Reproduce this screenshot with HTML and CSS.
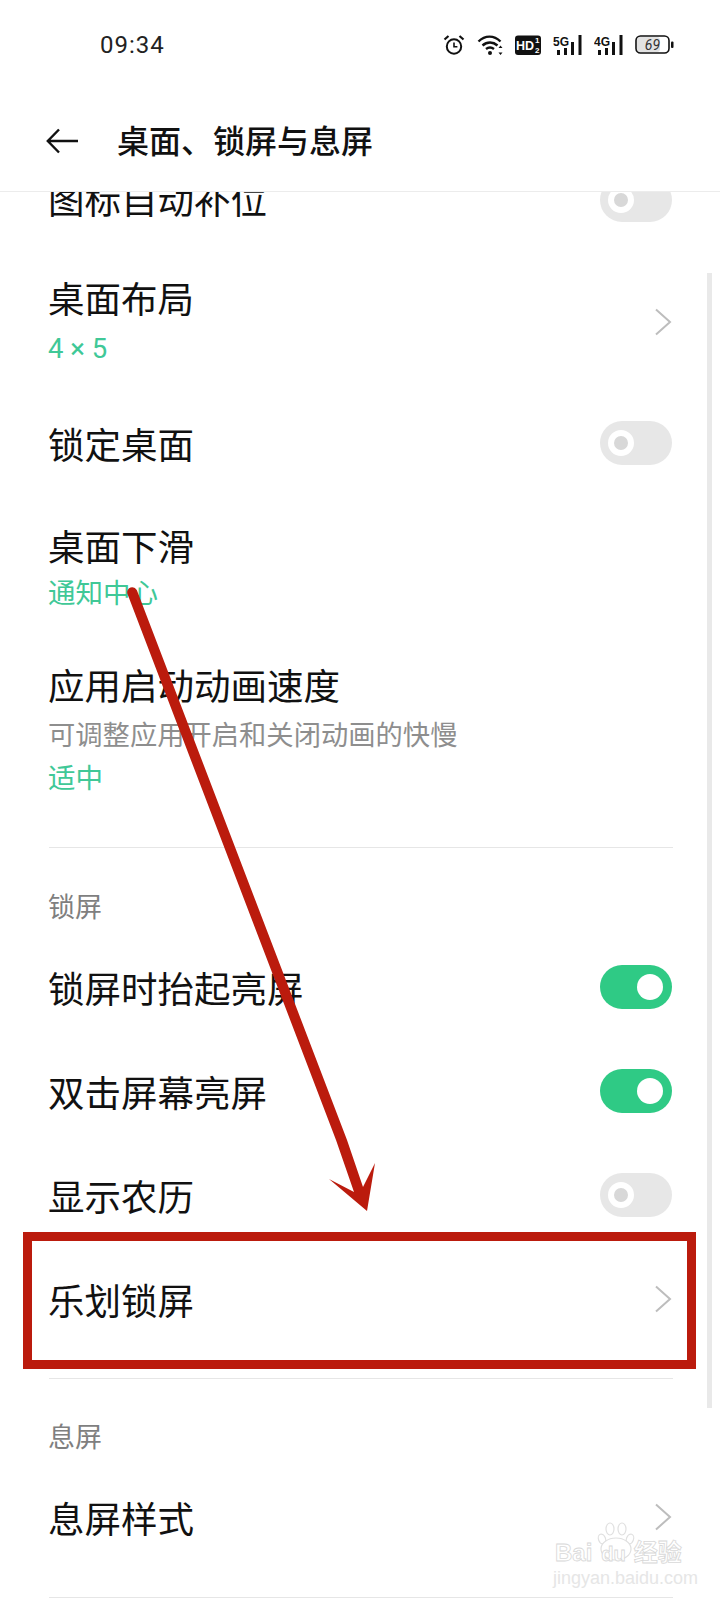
FILE: index.html
```html
<!DOCTYPE html>
<html lang="zh-CN">
<head>
    <meta charset="UTF-8">
    <meta name="viewport" content="width=device-width, initial-scale=1.0">
    <title>桌面、锁屏与息屏</title>
    <link rel="stylesheet" href="styles.css">
</head>
<body>
    <div class="screen">
        <header class="top">
            <div class="status">
                <span class="time">09:34</span>
                <div class="status-icons">
                    <svg width="22" height="22" viewBox="0 0 22 22" fill="none" stroke="#111" stroke-width="2">
                        <circle cx="11" cy="12.500" r="7.200"/>
                        <path d="M11 8.500v4.200h3.400" stroke-width="1.600"/>
                        <path d="M1.500 5.500 5.500 2M20.500 5.500 16.500 2" stroke-width="2.200"/>
                    </svg>
                    <svg width="26" height="22" viewBox="0 0 26 22" fill="none" stroke="#111" stroke-width="2.400">
                        <path d="M1.500 7.500c6.500-6.500 15.500-6.500 22 0"/>
                        <path d="M5.500 11.500c4.500-4 10.500-4 15 0"/>
                        <path d="M9 15c2.500-2 5.500-2 8 0"/>
                        <circle cx="13" cy="19" r="2" fill="#111" stroke="none"/>
                        <path d="M23.500 11.500l-2 2.500h4zM23.500 21l-2-2.500h4z" fill="#111" stroke="none"/>
                    </svg>
                    <svg width="26" height="22" viewBox="0 0 26 22">
                        <rect x="0" y="1.500" width="26" height="19.500" rx="3" fill="#111"/>
                        <text x="1" y="16" class="hd-text">HD</text>
                        <text x="20" y="9" class="hd-small">1</text>
                        <text x="20" y="18.500" class="hd-small">2</text>
                    </svg>
                    <svg width="29" height="22" viewBox="0 0 29 22" fill="#111">
                        <text x="0" y="12" class="net-text">5G</text>
                        <rect x="4" y="16" width="3" height="5"/>
                        <rect x="11" y="14" width="3" height="7"/>
                        <rect x="18" y="8" width="3" height="13"/>
                        <rect x="25.500" y="1" width="3" height="20"/>
                    </svg>
                    <svg width="29" height="22" viewBox="0 0 29 22" fill="#111">
                        <text x="0" y="12" class="net-text">4G</text>
                        <rect x="4" y="16" width="3" height="5"/>
                        <rect x="11" y="14" width="3" height="7"/>
                        <rect x="18" y="8" width="3" height="13"/>
                        <rect x="25.500" y="1" width="3" height="20"/>
                    </svg>
                    <svg width="39" height="22" viewBox="0 0 39 22">
                        <rect x="2" y="3" width="23" height="15" rx="3" fill="#e2e2e2"/>
                        <rect x="1" y="2" width="33" height="17" rx="4.500" fill="none" stroke="#111" stroke-width="1.600"/>
                        <rect x="36" y="7.500" width="2.500" height="6.500" rx="1" fill="#111"/>
                        <text x="17.500" y="16" class="batt-text">69</text>
                    </svg>
                </div>
            </div>
            <div class="titlebar">
                <svg class="back" width="32" height="26" viewBox="0 0 32 26" fill="none" stroke="#111" stroke-width="2.400">
                    <path d="M32 13H2M13 1.500 1.800 13 13 24.500"/>
                </svg>
                <h1>桌面、锁屏与息屏</h1>
            </div>
        </header>

        <main class="list">
            <div class="row row-first">
                <span class="name">图标自动补位</span>
                <span class="switch"></span>
            </div>
            <div class="row row-sub">
                <div>
                    <div class="name">桌面布局</div>
                    <div class="value value-num">4 × 5</div>
                </div>
                <svg class="chev" width="18" height="28" viewBox="0 0 18 28"><path d="M2 1.500 16 14 2 26.500"/></svg>
            </div>
            <div class="row">
                <span class="name">锁定桌面</span>
                <span class="switch"></span>
            </div>
            <div class="row row-sub row-sub2">
                <div>
                    <div class="name">桌面下滑</div>
                    <div class="value">通知中心</div>
                </div>
            </div>
            <div class="row row-long">
                <div>
                    <div class="name">应用启动动画速度</div>
                    <div class="hint">可调整应用开启和关闭动画的快慢</div>
                    <div class="value">适中</div>
                </div>
            </div>

            <hr class="line">
            <div class="section">锁屏</div>
            <div class="row">
                <span class="name">锁屏时抬起亮屏</span>
                <span class="switch on"></span>
            </div>
            <div class="row">
                <span class="name">双击屏幕亮屏</span>
                <span class="switch on"></span>
            </div>
            <div class="row">
                <span class="name">显示农历</span>
                <span class="switch"></span>
            </div>
            <div class="row">
                <span class="name">乐划锁屏</span>
                <svg class="chev" width="18" height="28" viewBox="0 0 18 28"><path d="M2 1.500 16 14 2 26.500"/></svg>
            </div>

            <hr class="line line-tight">
            <div class="section">息屏</div>
            <div class="row">
                <span class="name">息屏样式</span>
                <svg class="chev" width="18" height="28" viewBox="0 0 18 28"><path d="M2 1.500 16 14 2 26.500"/></svg>
            </div>
            <hr class="line">
        </main>

        <div class="scrollbar"></div>

        <!-- annotation drawn on top of the screenshot -->
        <div class="red-box"></div>
        <svg class="arrow" width="720" height="1600" viewBox="0 0 720 1600">
            <path d="M127.500 594a5 5 0 0 1 9.500-3.500L347 1140 363 1187 375 1163 367 1211 329 1179 354 1192 336 1140z" fill="#bb1b0d"/>
        </svg>

        <div class="watermark">
            <svg class="paw" width="40" height="40" viewBox="0 0 40 40" fill="#fff" stroke="#e0e0e0" stroke-width="1.200">
                <ellipse cx="6" cy="17" rx="3.500" ry="5" transform="rotate(-20 6 17)"/>
                <ellipse cx="14" cy="7" rx="4" ry="6"/>
                <ellipse cx="26" cy="7" rx="4" ry="6"/>
                <ellipse cx="34" cy="17" rx="3.500" ry="5" transform="rotate(20 34 17)"/>
                <ellipse cx="20" cy="27" rx="15" ry="11"/>
            </svg>
            <div class="wm-logo">Bai<span class="wm-du">du</span>经验</div>
            <div class="wm-url">jingyan.baidu.com</div>
        </div>
    </div>
</body>
</html>
```

FILE: styles.css
```css
* {
    box-sizing: border-box;
}
body {
    margin: 0;
    background: #fff;
    color: #111;
    font-family: "Noto Sans CJK SC", "Noto Sans", sans-serif;
}
.screen {
    position: relative;
    width: 720px;
    height: 1600px;
    overflow: hidden;
    background: #fff;
}

/* top area */
.top {
    height: 192px;
    border-bottom: 1px solid #ececec;
    background: #fff;
    position: relative;
    z-index: 1;
}
.status {
    display: flex;
    justify-content: space-between;
    align-items: center;
    height: 90px;
    padding: 0 46px 0 100px;
}
.time {
    font-family: Roboto, sans-serif;
    font-size: 24px;
    letter-spacing: 1px;
    color: #222;
}
.status-icons {
    display: flex;
    align-items: center;
    gap: 12px;
}
.hd-text {
    font: bold 12.500px "Liberation Sans", sans-serif;
    fill: #fff;
}
.hd-small {
    font: bold 8px "Liberation Sans", sans-serif;
    fill: #fff;
}
.net-text {
    font: bold 12px "Liberation Sans", sans-serif;
    fill: #111;
}
.batt-text {
    font: italic 14px Roboto, sans-serif;
    fill: #333;
    text-anchor: middle;
}
.titlebar {
    display: flex;
    align-items: center;
    gap: 39px;
    height: 101px;
    padding-left: 46px;
}
.titlebar h1 {
    margin: 0 0 4px;
    font-size: 32px;
    font-weight: 500;
    line-height: 44px;
}

/* settings list */
.list {
    height: 1408px;
    overflow: hidden;
}
.row {
    display: flex;
    justify-content: space-between;
    align-items: center;
    height: 104px;
    padding: 0 48px;
}
.row-first {
    margin-top: -43px;
}
.row-first .name {
    margin-top: -4px;
}
.row-sub {
    height: 139px;
}
.row-sub2 {
    height: 148px;
    padding-bottom: 2px;
}
.row-long {
    height: 176px;
    padding-bottom: 2px;
}
.name {
    font-size: 36.500px;
    line-height: 50px;
    color: #111;
}
.value {
    font-family: Roboto, "Noto Sans CJK SC", sans-serif;
    font-size: 27.500px;
    line-height: 46px;
    color: #40c897;
}
.value-num {
    margin-top: 3px;
}
.hint {
    font-size: 27.300px;
    line-height: 46px;
    color: #8e8e8e;
}
.section {
    height: 50px;
    padding-left: 48px;
    font-size: 27px;
    line-height: 40px;
    color: #7f7f7f;
}
.line {
    height: 1px;
    margin: 27px 47px 38px 49px;
    border: 0;
    background: #e6e6e6;
}
.line-tight {
    margin-top: 26px;
    margin-bottom: 37px;
}
.chev {
    margin-top: -2px;
    fill: none;
    stroke: #bdbdbd;
    stroke-width: 2;
}

/* toggles */
.switch {
    position: relative;
    width: 72px;
    height: 44px;
    margin-top: -2px;
    border-radius: 22px;
    background: #e7e7e7;
}
.switch::after {
    content: "";
    position: absolute;
    top: 9px;
    left: 8px;
    box-sizing: border-box;
    width: 26px;
    height: 26px;
    border: 6px solid #fff;
    border-radius: 50%;
    background: #d8d8d8;
}
.switch.on {
    background: #2fca85;
}
.switch.on::after {
    left: 37px;
    border: 0;
    background: #fff;
}

.scrollbar {
    position: absolute;
    top: 273px;
    left: 707px;
    width: 5px;
    height: 1135px;
    background: #e9e9e9;
}

/* red annotation */
.red-box {
    position: absolute;
    top: 1232px;
    left: 23px;
    width: 673px;
    height: 137px;
    border: 9px solid #bb1b0d;
}
.arrow {
    position: absolute;
    top: 0;
    left: 0;
}

/* baidu watermark */
.watermark {
    position: absolute;
    top: 1522px;
    left: 555px;
    width: 130px;
    color: #fff;
}
.paw {
    position: absolute;
    top: 0;
    left: 41px;
}
.wm-logo {
    position: relative;
    margin-top: 18px;
    font: bold 24px "Liberation Sans", "Noto Sans CJK SC", sans-serif;
    line-height: 26px;
    white-space: nowrap;
    -webkit-text-stroke: 0.800px #d8d8d8;
}
.wm-du {
    margin: 0 8px 0 9px;
    font-size: 20px;
}
.wm-url {
    position: relative;
    margin: 1px 0 0 -2px;
    font: 18px "Liberation Sans", sans-serif;
    white-space: nowrap;
    color: #e6e6e6;
}
```
